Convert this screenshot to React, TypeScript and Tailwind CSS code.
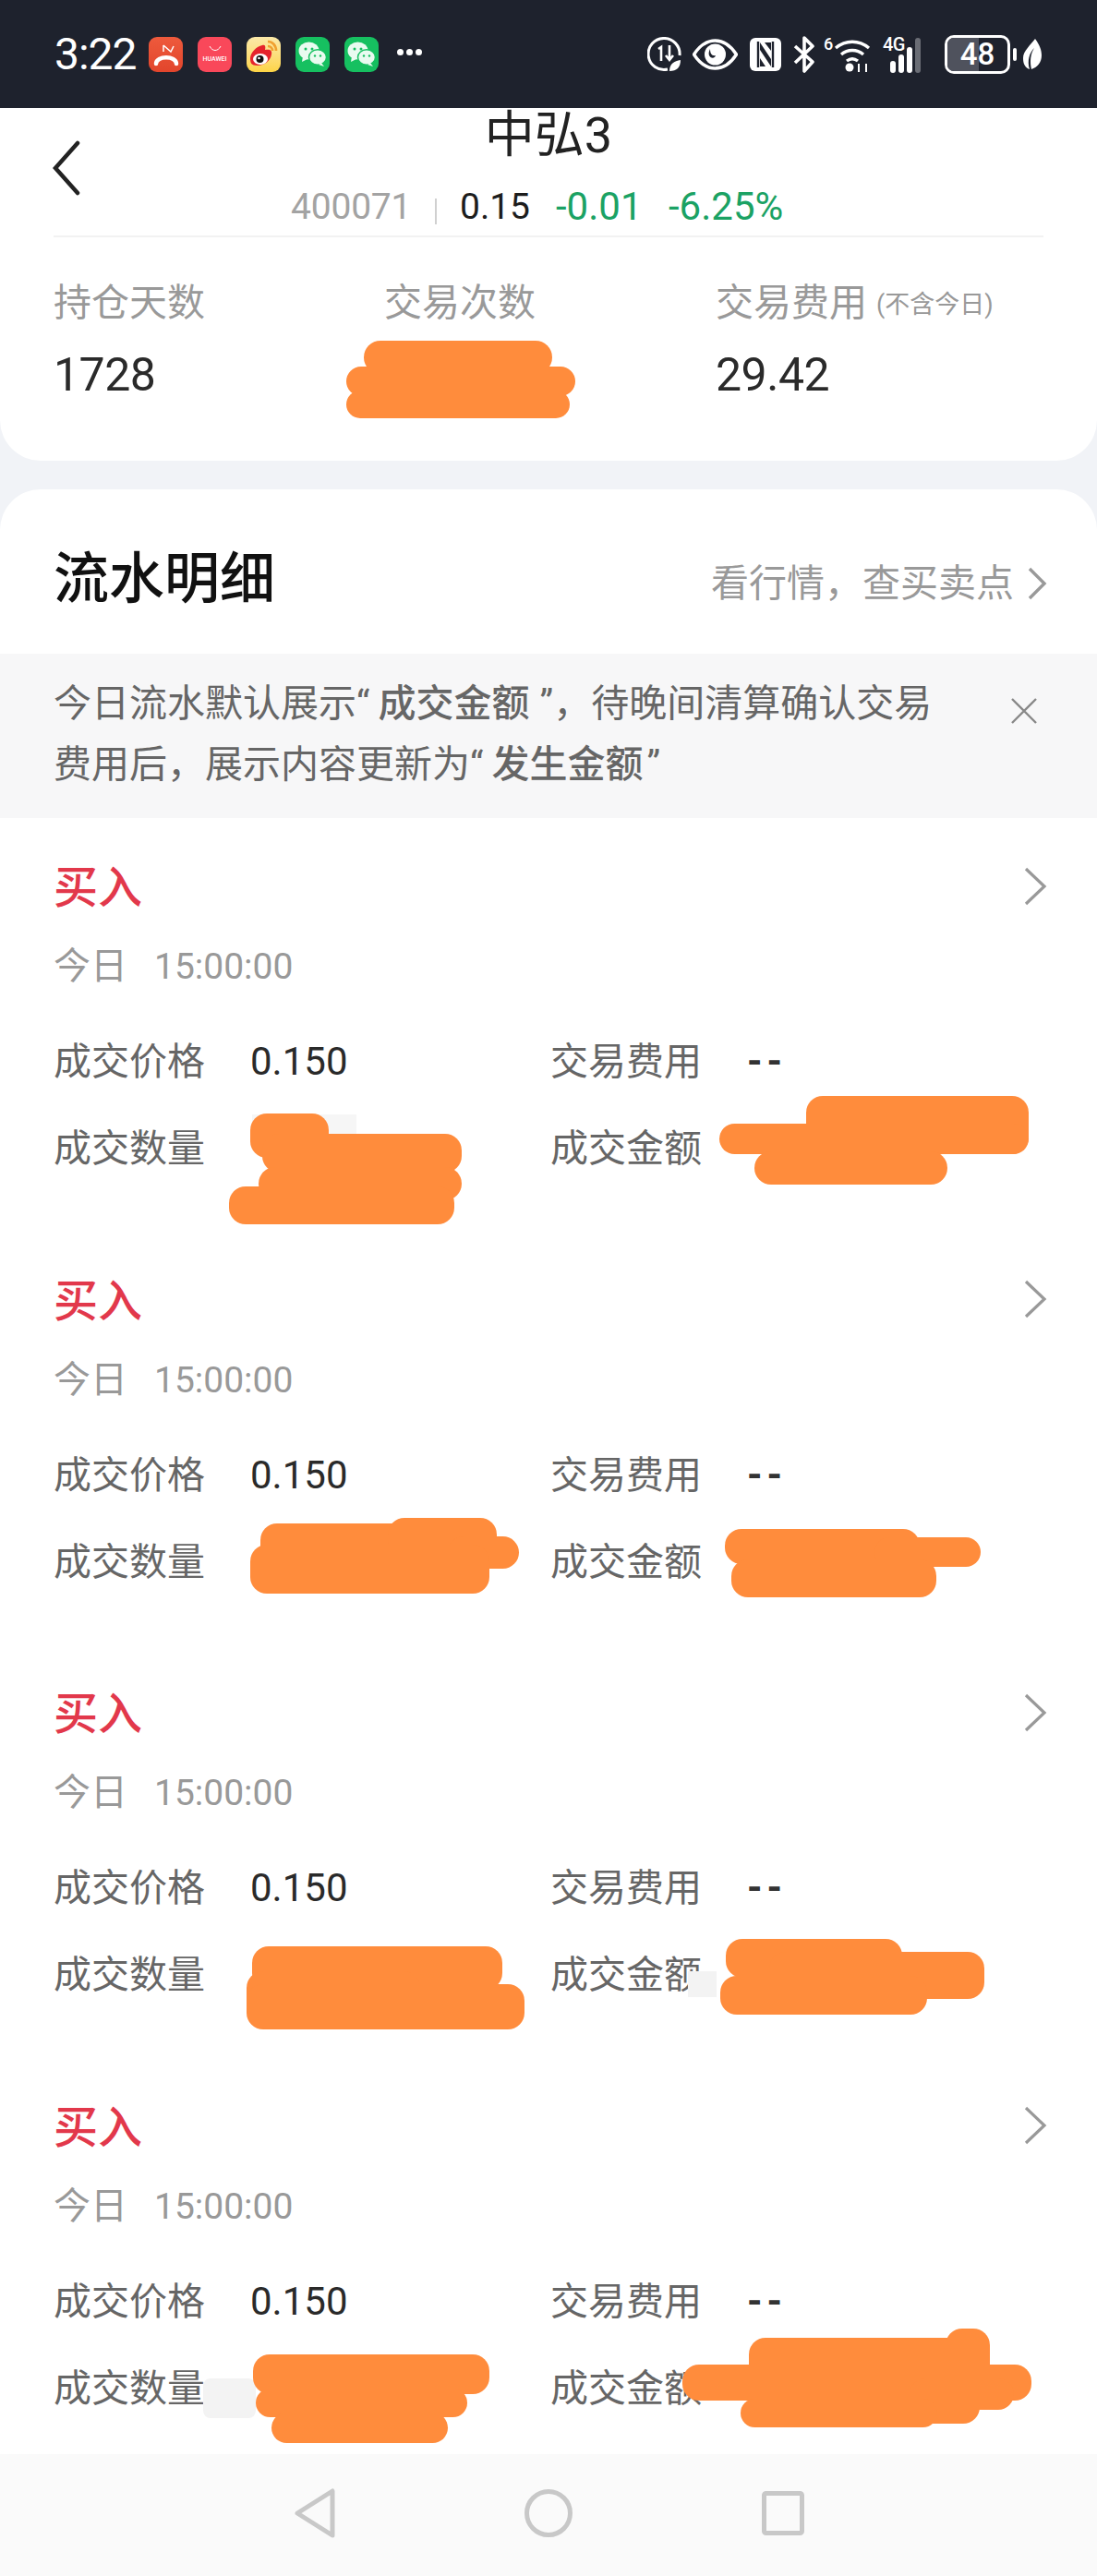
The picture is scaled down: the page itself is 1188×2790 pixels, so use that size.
import { ReactNode } from 'react';

const CJK = "font-['Roboto','Noto_Sans_CJK_SC',sans-serif]";

// Redaction scribbles, page coordinates: [x, y, w, h]
const scribbles: number[][] = [
  [394, 369, 204, 36], [375, 397, 248, 32], [375, 423, 242, 30],
  [271, 1206, 85, 48], [284, 1228, 216, 42], [280, 1264, 220, 36], [248, 1285, 244, 41],
  [873, 1187, 241, 63], [779, 1217, 335, 33], [817, 1247, 209, 36],
  [282, 1650, 173, 52], [420, 1644, 118, 42], [485, 1664, 77, 35], [271, 1673, 259, 53],
  [785, 1656, 211, 38], [947, 1665, 115, 32], [792, 1689, 222, 41],
  [273, 2108, 271, 47], [267, 2135, 188, 51], [267, 2149, 301, 49],
  [786, 2100, 191, 42], [833, 2114, 233, 51], [780, 2140, 224, 42],
  [274, 2550, 256, 43], [277, 2587, 229, 31], [294, 2613, 191, 33],
  [811, 2532, 250, 93], [1024, 2522, 48, 60], [739, 2561, 378, 39], [985, 2576, 113, 34], [802, 2598, 213, 31],
];

function Scribbles() {
  return (
    <svg className="absolute left-0 top-0 pointer-events-none" width="1188" height="2790">
      <rect x="273" y="1207" width="113" height="26" fill="#f6f6f6" />
      <rect x="220" y="2576" width="57" height="43" rx="8" fill="#f3f3f3" />
      <rect x="745" y="2135" width="31" height="28" fill="#f3f3f3" />
      {scribbles.map(([x, y, w, h], i) => (
        <rect key={i} x={x} y={y} width={w} height={h} rx={Math.min(h / 2, 18)} fill="#ff8c3c" />
      ))}
    </svg>
  );
}

function AppIcon({ className, children }: { className: string; children: ReactNode }) {
  return (
    <div className={`w-[37px] h-[38px] rounded-[9px] flex items-center justify-center overflow-hidden ${className}`}>
      {children}
    </div>
  );
}

function WeChatIcon() {
  return (
    <AppIcon className="bg-[#16c060]">
      <svg width="31" height="28" viewBox="0 0 31 28">
        <ellipse cx="11.5" cy="10" rx="11" ry="9.5" fill="#e9fbf0" />
        <path d="M5 16l-1 6 6-3z" fill="#e9fbf0" />
        <ellipse cx="21" cy="17" rx="9.5" ry="8.2" fill="#e9fbf0" stroke="#16c060" strokeWidth="1.5" />
        <path d="M25 23l3 4-6-2z" fill="#e9fbf0" />
        <circle cx="8" cy="8" r="1.5" fill="#16c060" />
        <circle cx="15" cy="8" r="1.5" fill="#16c060" />
        <circle cx="18" cy="15.5" r="1.2" fill="#16c060" />
        <circle cx="24" cy="15.5" r="1.2" fill="#16c060" />
      </svg>
    </AppIcon>
  );
}

function StatusBar() {
  return (
    <div className="h-[117px] shrink-0 bg-[#1e222d] flex items-center pl-[59px] text-white">
      <span className="w-[102px] text-[48px] leading-none font-['Roboto',sans-serif] tracking-[-1px]">3:22</span>
      <div className="flex gap-4">
        <AppIcon className="bg-gradient-to-b from-[#ee5a3c] to-[#e2452c]">
          <svg width="28" height="30" viewBox="0 0 28 30" fill="none" stroke="#fff">
            <path d="M11 5v7M11 5l8 7 3-6" strokeWidth="1.5" />
            <path d="M3 25c0-9 22-9 22 0" strokeWidth="4.5" strokeLinecap="round" />
          </svg>
        </AppIcon>
        <AppIcon className="bg-[#f9485a] flex-col">
          <svg width="14" height="7" viewBox="0 0 14 7" fill="none" stroke="#fff" strokeWidth="1">
            <path d="M1 1c3 6 9 6 12 0" />
          </svg>
          <span className="text-[7px] leading-[10px] mt-[3px] font-['Roboto',sans-serif] font-medium">HUAWEI</span>
        </AppIcon>
        <AppIcon className="bg-gradient-to-b from-[#fbe9a8] to-[#fdd444]">
          <svg width="35" height="34" viewBox="0 0 35 34" fill="none">
            <path d="M22 3c5 0 9 4 9 10M22 8c3 0 5 2 5 5" stroke="#f0a030" strokeWidth="2.6" />
            <path d="M3 21c0-6 7-13 13-14 3-1 4 1 3 5 5-1 8 0 7 5-1 7-8 12-15 12S3 26 3 21z" fill="#e5232c" />
            <ellipse cx="14" cy="22" rx="8" ry="6" fill="#fff" />
            <circle cx="13.5" cy="22" r="4" fill="#111" />
            <circle cx="12.5" cy="21" r="1.3" fill="#fff" />
          </svg>
        </AppIcon>
        <WeChatIcon />
        <WeChatIcon />
      </div>
      <div className="ml-[20px] -mt-[4px] flex gap-[3px]">
        <span className="w-[7px] h-[7px] rounded-full bg-white" />
        <span className="w-[7px] h-[7px] rounded-full bg-white" />
        <span className="w-[7px] h-[7px] rounded-full bg-white" />
      </div>

      <div className="ml-auto mr-[60px] flex items-center">
        <svg width="37" height="38" viewBox="0 0 37 38" fill="none" stroke="#fff">
          <path d="M22 35A17 17 0 1 1 35 20" strokeWidth="3" />
          <path d="M12 13l3-2v15M24 9v15M20 20l4 5 4-5" strokeWidth="2.6" />
          <path d="M24 37c0-8 5-11 12-12 0 8-4 12-12 12z" fill="#fff" stroke="none" />
        </svg>
        <svg className="ml-[12px]" width="49" height="34" viewBox="0 0 49 34">
          <path d="M1.5 17C10 4 18 2 24.5 2S39 4 47.5 17C39 30 31 32 24.5 32S10 30 1.5 17z" fill="none" stroke="#fff" strokeWidth="3.4" />
          <circle cx="24.5" cy="17" r="11.5" fill="#fff" />
          <path d="M19 11c0 5 2 8 6 7-1 4-6 3-7 0-1-2 0-5 1-7z" fill="#1e222d" />
        </svg>
        <svg className="ml-[13px]" width="34" height="36" viewBox="0 0 34 36">
          <rect x="0" y="0" width="34" height="36" rx="6" fill="#fff" />
          <path d="M9 4v28M25 4v28" stroke="#1e222d" strokeWidth="2.4" />
          <path d="M11 5l12 18v8L11 13zM16 5h7v9zM11 31v-9l6 9z" fill="#1e222d" />
        </svg>
        <svg className="ml-[13px]" width="24" height="40" viewBox="0 0 24 40" fill="none" stroke="#fff" strokeWidth="3.6" strokeLinejoin="round">
          <path d="M2 11l19 17-9 10V2l9 9L2 29" />
        </svg>
        <div className="relative ml-[9px] w-[52px] h-[40px]">
          <span className="absolute left-0 top-0 text-[18px] leading-[18px] font-medium font-['Roboto',sans-serif]">6</span>
          <svg className="absolute left-[10px] top-0" width="42" height="40" viewBox="0 0 42 40" fill="none" stroke="#fff" strokeWidth="3.4">
            <path d="M3 13c11-9 25-9 36 0M9 20c7-6 17-6 24 0M15 27c4-3 8-3 12 0" />
            <circle cx="18" cy="34" r="4.5" fill="#fff" stroke="none" />
            <path d="M28 30v9M36 30v9" strokeWidth="2" />
          </svg>
        </div>
        <div className="relative ml-[12px] w-[53px] h-[40px]">
          <span className="absolute left-0 -top-[1px] text-[20px] leading-[20px] font-medium font-['Roboto',sans-serif] tracking-[-0.5px]">4G</span>
          <div className="absolute left-[8px] bottom-0 flex items-end gap-[3px]">
            <span className="w-[6px] h-[13px] rounded-[3px] bg-white" />
            <span className="w-[6px] h-[20px] rounded-[3px] bg-white" />
            <span className="w-[6px] h-[28px] rounded-[3px] bg-white" />
            <span className="w-[6px] h-[38px] rounded-[3px] bg-[#6a6d75]" />
          </div>
        </div>
        <div className="ml-[14px] relative w-[71px] h-[42px] rounded-[10px] border-[3px] border-white overflow-hidden flex items-center justify-center">
          <span className="absolute left-0 top-0 bottom-0 w-[34px] bg-[#4f525d]" />
          <span className="relative text-[33px] leading-none font-medium font-['Roboto',sans-serif]">48</span>
        </div>
        <span className="ml-[3px] w-[4px] h-[14px] rounded-[2px] bg-white" />
        <svg className="ml-[7px]" width="20" height="34" viewBox="0 0 20 34">
          <path d="M13 0c5 7 7 12 7 18 0 8-5 13-11 15C7 25 8 16 12 10 7 15 4 24 7 33 2 31 0 27 0 21 0 13 8 7 13 0z" fill="#fff" />
        </svg>
      </div>
    </div>
  );
}

function Stat({ label, note, value, className }: { label: string; note?: string; value?: string; className: string }) {
  return (
    <div className={className}>
      <div className="h-[50px] flex items-center text-[41px] leading-[50px] text-[#999]">
        {label}
        {note && <span className="ml-[10px] mt-[4px] text-[27px] leading-none">{note}</span>}
      </div>
      <div className="mt-[28px] h-[50px] text-[50px] leading-[50px] text-[#2a2a2a] font-['Roboto',sans-serif] tracking-[-0.5px]">
        {value}
      </div>
    </div>
  );
}

function Header() {
  return (
    <div className="h-[382px] shrink-0 bg-white rounded-b-[44px]">
      <div className="relative h-[140px] mx-[58px] border-b-2 border-[#f2f2f2] text-center">
        <svg className="absolute -left-[1px] top-[35px]" width="30" height="60" viewBox="0 0 30 60" fill="none" stroke="#222" strokeWidth="4.5" strokeLinecap="round">
          <path d="M27 3L3 30l24 27" />
        </svg>
        <div className="absolute left-0 right-0 top-0 h-[60px] text-[54px] leading-[60px] text-[#222]">中弘3</div>
        <div className="absolute left-[257px] top-[84px] h-[46px] flex items-center text-[39px] leading-[46px] font-['Roboto',sans-serif]">
          <span className="w-[156px] text-left text-[#a3a3a3] tracking-[-0.2px]">400071</span>
          <span className="w-[2px] h-[28px] mt-[10px] bg-[#d0d0d0]" />
          <span className="ml-[25px] w-[104px] text-left text-[#1d1d1d]">0.15</span>
          <span className="w-[122px] text-left text-[42px] text-[#1ba264]">-0.01</span>
          <span className="text-[42px] text-[#1ba264]">-6.25%</span>
        </div>
      </div>
      <div className="relative h-[242px]">
        <Stat label="持仓天数" value="1728" className="absolute left-[58px] top-[46px]" />
        <Stat label="交易次数" className="absolute left-[416px] top-[46px]" />
        <Stat label="交易费用" note="(不含今日)" value="29.42" className="absolute left-[775px] top-[46px]" />
      </div>
    </div>
  );
}

function Notice() {
  return (
    <div className="h-[178px] shrink-0 bg-[#f7f7f8] pl-[58px] pr-[64px] pt-[21px] flex justify-between text-[41px] leading-[66px] text-[#666]">
      <p>
        今日流水默认展示“<span className="pl-[9px] pr-[11px] font-medium">成交金额</span>”，待晚间清算确认交易
        <br />
        费用后，展示内容更新为“<span className="pl-[9px] pr-[4px] font-medium">发生金额</span>”
      </p>
      <svg className="mt-[26px]" width="30" height="30" viewBox="0 0 30 30" stroke="#888" strokeWidth="2.4">
        <path d="M2 2l26 26M28 2L2 28" />
      </svg>
    </div>
  );
}

function Field({ label, value, empty }: { label: string; value?: string; empty?: boolean }) {
  return (
    <div className="flex h-[50px] items-center">
      <span className="w-[213px] text-[41px] leading-[50px] text-[#666]">{label}</span>
      {value &&
        (empty ? (
          <span className="text-[42px] leading-[50px] font-bold tracking-[5px] text-[#333] font-['Roboto',sans-serif]">{value}</span>
        ) : (
          <span className="text-[42px] leading-[50px] text-[#2a2a2a] font-['Roboto',sans-serif]">{value}</span>
        ))}
    </div>
  );
}

function Record() {
  return (
    <div className="h-[447.5px] shrink-0 pt-[51px] pl-[58px] pr-[54px]">
      <div className="h-[50px] flex items-center justify-between">
        <span className="text-[48px] leading-[50px] font-medium text-[#e2384b]">买入</span>
        <svg className="-mt-[5px]" width="25" height="42" viewBox="0 0 25 42" fill="none" stroke="#999" strokeWidth="3.2">
          <path d="M2 2l20 19L2 40" />
        </svg>
      </div>
      <div className="mt-[37px] h-[46px] flex items-center text-[#999]">
        <span className="w-[109px] text-[40px] leading-[46px]">今日</span>
        <span className="text-[39px] leading-[46px] font-['Roboto',sans-serif]">15:00:00</span>
      </div>
      <div className="mt-[55px] grid grid-cols-[538px_1fr] gap-y-[44px]">
        <Field label="成交价格" value="0.150" />
        <Field label="交易费用" value="--" empty />
        <Field label="成交数量" />
        <Field label="成交金额" />
      </div>
    </div>
  );
}

export default function App() {
  return (
    <div className={`relative w-[1188px] h-[2790px] overflow-hidden flex flex-col bg-[#f1f3f7] ${CJK}`}>
      <StatusBar />
      <Header />
      <div className="flex-1 min-h-0 mt-[31px] bg-white rounded-t-[44px] overflow-hidden flex flex-col">
        <div className="h-[178px] shrink-0 flex items-center justify-between pl-[58px] pr-[54px]">
          <h1 className="mt-[18px] text-[60px] leading-[70px] font-medium text-[#111]">流水明细</h1>
          <div className="mt-[26px] flex items-center gap-[14px] text-[41px] leading-[50px] text-[#999]">
            看行情，查买卖点
            <svg width="22" height="36" viewBox="0 0 22 36" fill="none" stroke="#999" strokeWidth="3.4">
              <path d="M3 2l16 16L3 34" />
            </svg>
          </div>
        </div>
        <Notice />
        <Record />
        <Record />
        <Record />
        <Record />
      </div>
      <Scribbles />
      <div className="absolute left-0 right-0 bottom-0 h-[132px] bg-[#fafafa] flex items-center pl-[318px] pb-[4px]">
        <svg width="46" height="54" viewBox="0 0 46 54" fill="none" stroke="#c8c8c8" strokeWidth="5" strokeLinejoin="round">
          <path d="M42 3v48L4 27z" />
        </svg>
        <svg className="ml-[204px]" width="52" height="52" viewBox="0 0 52 52" fill="none" stroke="#c8c8c8" strokeWidth="5">
          <circle cx="26" cy="26" r="23.5" />
        </svg>
        <svg className="ml-[205px]" width="46" height="48" viewBox="0 0 46 48" fill="none" stroke="#c8c8c8" strokeWidth="5">
          <rect x="2.5" y="2.5" width="41" height="43" rx="2" />
        </svg>
      </div>
    </div>
  );
}
